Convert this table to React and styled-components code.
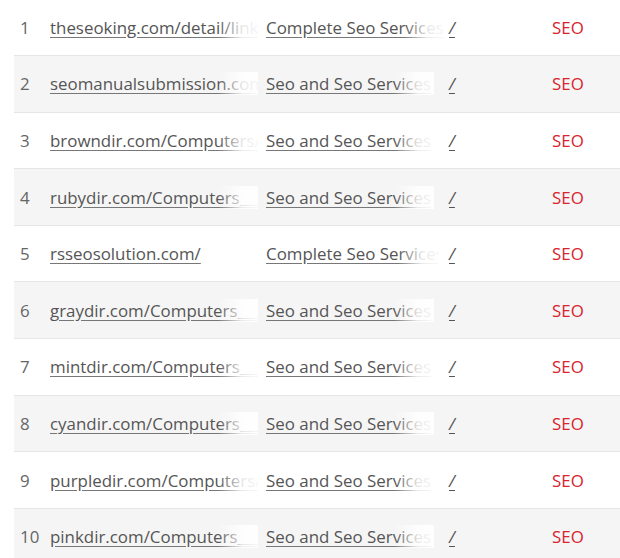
import React from 'react';
import styled, { createGlobalStyle } from 'styled-components';

const GlobalStyle = createGlobalStyle`
    html, body {
        margin: 0;
        padding: 0;
        background: #ffffff;
    }
    body {
        font-family: 'Open Sans', 'Liberation Sans', sans-serif;
        overflow: hidden;
    }
`;

const Table = styled.div`
    margin: -1.8px 0 0 14px;
`;

const Row = styled.div`
    display: grid;
    grid-template-columns: 36px 216px 183px 103px 1fr;
    align-items: center;
    height: 56.67px;
    box-sizing: border-box;
    border-top: 1px solid ${p => (p.$first ? 'transparent' : '#e6e6e6')};
    background: ${p => (p.$shaded ? '#f5f5f5' : '#ffffff')};
    font-size: 16.9px;
`;

const Num = styled.div`
    padding-left: 6px;
    color: #666666;
`;

const Fade = styled.div`
    position: relative;
    overflow: hidden;
    white-space: nowrap;
    width: ${p => p.$w}px;

    &::after {
        content: '';
        position: absolute;
        top: 0;
        right: 0;
        bottom: 0;
        width: 40px;
        background: linear-gradient(to right, rgba(255, 255, 255, 0), rgba(255, 255, 255, 0.85) 60%, rgba(255, 255, 255, 0.95));
    }
`;

const Link = styled.a`
    color: #555555;
    text-decoration: underline;
    text-decoration-color: #777777;
    text-underline-offset: 3px;
`;

const Slash = styled.a`
    color: #555555;
    font-style: italic;
    text-decoration: underline;
    text-underline-offset: 3px;
`;

const Tag = styled.div`
    color: #d9232d;
`;

const rows = [
    ['theseoking.com/detail/link-seo-services', 'Complete Seo Services'],
    ['seomanualsubmission.com/', 'Seo and Seo Services'],
    ['browndir.com/Computers/', 'Seo and Seo Services'],
    ['rubydir.com/Computers_____Internet/', 'Seo and Seo Services'],
    ['rsseosolution.com/', 'Complete Seo Services'],
    ['graydir.com/Computers_____Internet/', 'Seo and Seo Services'],
    ['mintdir.com/Computers_____Internet/', 'Seo and Seo Services'],
    ['cyandir.com/Computers_____Internet/', 'Seo and Seo Services'],
    ['purpledir.com/Computers/', 'Seo and Seo Services'],
    ['pinkdir.com/Computers_____Internet/', 'Seo and Seo Services'],
];

const App = () => (
    <>
        <GlobalStyle />
        <Table>
            {rows.map(([url, title], i) => (
                <Row key={i} $first={i === 0} $shaded={i % 2 === 1}>
                    <Num>{i + 1}</Num>
                    <Fade $w={208}>
                        <Link href="#">{url}</Link>
                    </Fade>
                    <Fade $w={i === 0 ? 178 : i === 4 ? 172 : 168}>
                        <Link href="#">{title}</Link>
                    </Fade>
                    <div>
                        <Slash href="#">/</Slash>
                    </div>
                    <Tag>SEO</Tag>
                </Row>
            ))}
        </Table>
    </>
);

export default App;
